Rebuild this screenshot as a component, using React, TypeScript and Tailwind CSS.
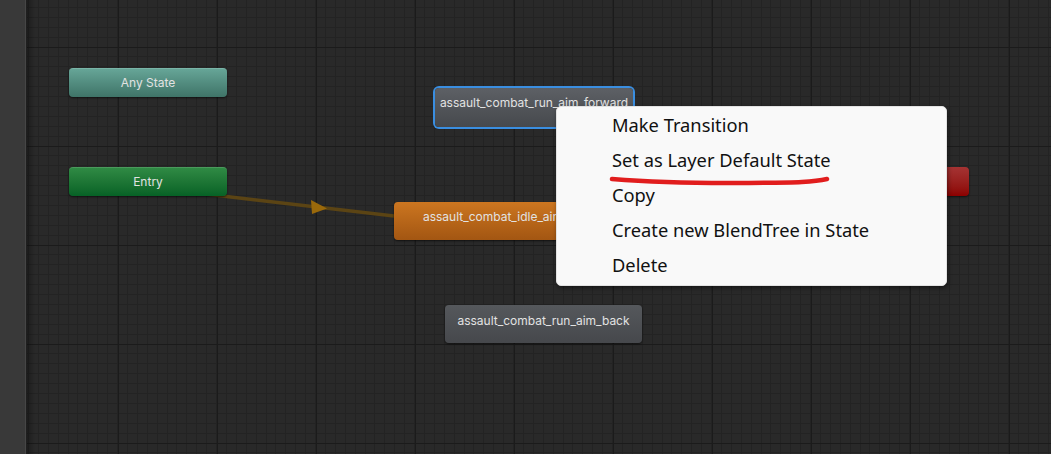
import React from "react";

type NodeProps = {
  label: string;
  x: number;
  y: number;
  w: number;
  h: number;
  tone: string;
  extra?: string;
};

// state node on the animator canvas
function StateNode({ label, x, y, w, h, tone, extra = "" }: NodeProps) {
  return (
    <div
      className={`absolute flex justify-center rounded-[4px] text-[12px] leading-[14px] text-[#e2e2e2] shadow-[0_1px_2px_rgba(0,0,0,0.6)] whitespace-nowrap overflow-visible ${tone} ${extra}`}
      style={{ left: x, top: y, width: w, height: h }}
    >
      {label}
    </div>
  );
}

const MENU = [
  "Make Transition",
  "Set as Layer Default State",
  "Copy",
  "Create new BlendTree in State",
  "Delete",
];

export default function App() {
  return (
    <div className="flex h-[454px] w-[1051px] overflow-hidden bg-[#282828] font-['Inter','Liberation_Sans',sans-serif]">
      {/* Left panel */}
      <div className="w-[26px] shrink-0 bg-[#393939] border-r border-[#464646]" />
      <div className="w-px shrink-0 bg-[#1f1f1f]" />

      {/* Canvas */}
      <div className="relative flex-1 bg-[#292929] bg-[linear-gradient(to_right,#1b1b1b_1px,transparent_1px),linear-gradient(to_bottom,#1b1b1b_1px,transparent_1px),repeating-linear-gradient(to_right,#232323_0_1px,transparent_1px_9.9px),repeating-linear-gradient(to_bottom,#232323_0_1px,transparent_1px_9.9px)] bg-size-[99px_99px,99px_99px,auto,auto] bg-position-[91px_0,0_47px,1px_0,0_7px]">
        <div className="absolute inset-y-0 left-0 w-[8px] bg-gradient-to-r from-black/30 to-transparent" />

        {/* transition */}
        <svg className="absolute left-0 top-0" width="1024" height="454">
          <line x1="170" y1="193" x2="367" y2="216" stroke="#5b4414" strokeWidth="3.5" />
          <polygon points="284,200 300,208.5 285,214" fill="#9a690b" />
        </svg>

        <StateNode
          label="Any State"
          x={42}
          y={68}
          w={158}
          h={29}
          tone="items-center bg-gradient-to-b from-[#66a597] to-[#3f7468] border-t border-[#7ab5a8]"
        />
        <StateNode
          label="Entry"
          x={42}
          y={167}
          w={158}
          h={29}
          tone="items-center bg-gradient-to-b from-[#2f8a44] to-[#066226] border-t border-[#4a9a5c]"
        />
        <StateNode
          label="assault_combat_run_aim_forward"
          x={408}
          y={88}
          w={198}
          h={39}
          tone="items-start pt-[8px] bg-gradient-to-b from-[#5d6065] to-[#46494d]"
          extra="ring-2 ring-[#3a8ee0] shadow-[0_0_6px_rgba(58,142,224,0.8)]"
        />
        <StateNode
          label="assault_combat_idle_aim"
          x={367}
          y={202}
          w={198}
          h={38}
          tone="items-start pt-[8px] bg-gradient-to-b from-[#cc7620] to-[#a35612]"
        />
        <StateNode
          label="Exit"
          x={784}
          y={167}
          w={158}
          h={29}
          tone="items-center bg-gradient-to-b from-[#a53333] to-[#8c0000]"
        />
        <StateNode
          label="assault_combat_run_aim_back"
          x={418}
          y={305}
          w={197}
          h={38}
          tone="items-start pt-[9px] bg-gradient-to-b from-[#55585c] to-[#46484c]"
        />

        {/* Context menu */}
        <div className="absolute left-[529px] top-[106px] w-[391px] h-[180px] rounded-[5px] bg-[#f9f9f9] border border-[#e2e2e2] shadow-[1px_2px_4px_rgba(0,0,0,0.45)] pt-[1px] font-['Noto_Sans','Open_Sans',sans-serif]">
          <ul className="flex flex-col">
            {MENU.map((item) => (
              <li
                key={item}
                className="h-[35px] pl-[55px] flex items-center text-[18.3px] text-[#111] leading-none"
              >
                {item}
              </li>
            ))}
          </ul>
          <svg className="absolute left-[52px] top-[67px]" width="224" height="14">
            <path
              d="M3 5 C 40 8, 90 9.5, 140 9 S 205 8, 218 5"
              fill="none"
              stroke="#e11d1d"
              strokeWidth="4.5"
              strokeLinecap="round"
            />
          </svg>
        </div>
      </div>
    </div>
  );
}
